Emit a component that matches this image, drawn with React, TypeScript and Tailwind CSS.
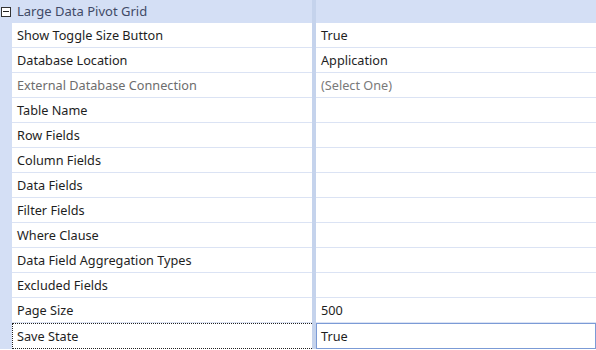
import React from 'react';

interface Row {
  label: string;
  value: string;
  disabled?: boolean;
}

const rows: Row[] = [
  { label: 'Show Toggle Size Button', value: 'True' },
  { label: 'Database Location', value: 'Application' },
  { label: 'External Database Connection', value: '(Select One)', disabled: true },
  { label: 'Table Name', value: '' },
  { label: 'Row Fields', value: '' },
  { label: 'Column Fields', value: '' },
  { label: 'Data Fields', value: '' },
  { label: 'Filter Fields', value: '' },
  { label: 'Where Clause', value: '' },
  { label: 'Data Field Aggregation Types', value: '' },
  { label: 'Excluded Fields', value: '' },
  { label: 'Page Size', value: '500' },
];

const App: React.FC = () => {
  return (
    <div
      className="w-[596px] h-[350px] overflow-hidden bg-white text-[12.7px] text-[#1e1e1e]"
      style={{ fontFamily: '"Noto Sans", "Open Sans", sans-serif' }}
    >
      {/* category header */}
      <div className="flex h-[23px] bg-[#d4dff5]">
        <div className="w-[312px] flex items-center">
          <div className="ml-[1px] w-[10px] h-[10px] border border-[#333] bg-white flex items-center justify-center">
            <div className="w-[6px] h-[1px] bg-[#222]" />
          </div>
          <span className="ml-[6px] text-[#414a66] leading-none text-[13px]">Large Data Pivot Grid</span>
        </div>
        <div className="w-1 bg-[#c5d3ec]" />
        <div className="flex-1" />
      </div>

      {rows.map(row => (
        <div key={row.label} className="flex h-[25px]">
          <div className="w-3 bg-[#d4dff5]" />
          <div
            className={`w-[300px] flex items-center pl-[5px] pt-[2px] border-b border-[#dbe3f4] ${row.disabled ? 'text-[#6d6d6d]' : ''}`}
          >
            {row.label}
          </div>
          <div className="w-1 bg-[#c5d3ec]" />
          <div
            className={`flex-1 flex items-center pl-[5px] pt-[2px] border-b border-[#dbe3f4] ${row.disabled ? 'text-[#7a7a7a]' : ''}`}
          >
            {row.value}
          </div>
        </div>
      ))}

      {/* selected row */}
      <div className="flex h-[26px]">
        <div className="w-3 bg-[#d4dff5]" />
        <div className="w-[300px] flex items-center pl-[4px] pt-[1px] border border-r-0 border-dotted border-[#222]">Save State</div>
        <div className="w-1 bg-[#c5d3ec]" />
        <div className="flex-1 flex items-center pl-[4px] pt-[1px] border border-[#7b9bd6]">True</div>
      </div>
    </div>
  );
};

export default App;
